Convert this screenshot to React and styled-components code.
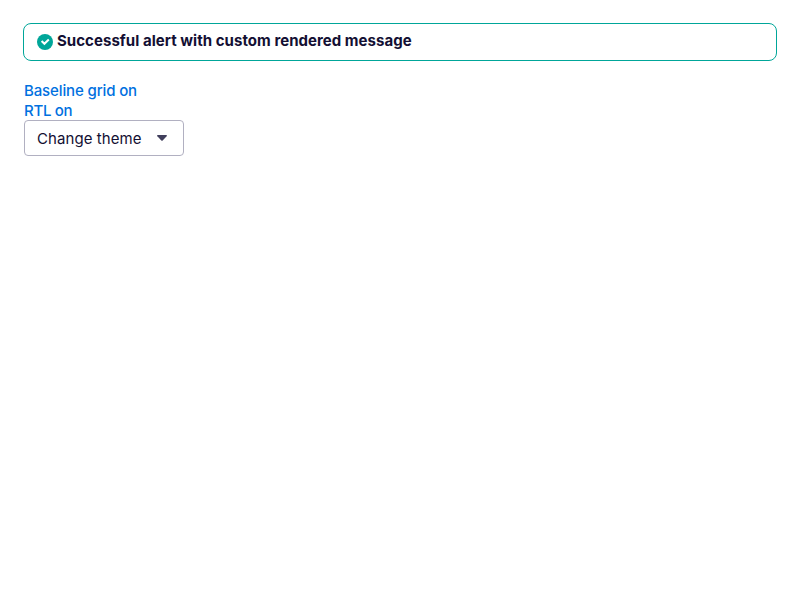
import React from "react";
import styled, { createGlobalStyle } from "styled-components";

const GlobalStyle = createGlobalStyle`
  * { box-sizing: border-box; }
  body { margin: 0; background: #fff; color: #130f33; font-family: Inter, sans-serif; font-size: 15px; line-height: 20px; }
`;
const Page = styled.main`
  padding: 23px 23px 0;
`;
const Alert = styled.div`
  display: flex;
  align-items: center;
  gap: 4px;
  height: 38px;
  padding: 0 13px;
  border: 1px solid #00a699;
  border-radius: 8px;
`;
const CheckIcon = styled.svg`
  width: 16px;
  height: 16px;
  flex: none;
`;
const Message = styled.span`
  padding-bottom: 2px;
  font-weight: 700;
  letter-spacing: 0.04px;
  white-space: nowrap;
`;
const Controls = styled.div`
  display: flex;
  flex-direction: column;
  align-items: flex-start;
  padding: 20px 1px 0;
`;
const Link = styled.a`
  height: 20px;
  color: #0070e0;
  white-space: nowrap;
  font-weight: 500;
  letter-spacing: ${({ $tracking }) => $tracking};
`;
const ThemeButton = styled.button`
  display: flex;
  align-items: center;
  justify-content: space-between;
  width: 160px;
  height: 36px;
  margin-top: -1px;
  padding: 0 16px 0 12px;
  border: 1px solid #b1b0c1;
  border-radius: 4px;
  background: #fff;
  color: inherit;
  font: inherit;
  white-space: nowrap;
`;
const ButtonLabel = styled.span`
  padding-top: 2px;
  letter-spacing: 0.08px;
`;
const Caret = styled.svg`
  width: 10px;
  height: 6px;
`;

export default function App() {
  return (
    <>
      <GlobalStyle />
      <Page>
        <Alert role="status">
          <CheckIcon viewBox="0 0 16 16">
            <circle cx="8" cy="8" r="8" fill="#00a699" />
            <path d="M4.6 7.1 7.4 9.8 11.8 5.6" fill="none" stroke="#fff" strokeWidth="2.1" />
          </CheckIcon>
          <Message>Successful alert with custom rendered message</Message>
        </Alert>
        <Controls>
          <Link $tracking="-0.13px">Baseline grid on</Link>
          <Link $tracking="-0.3px">RTL on</Link>
          <ThemeButton>
            <ButtonLabel>Change theme</ButtonLabel>
            <Caret viewBox="0 0 10 6">
              <path d="M.7 0H9.3Q10.4 .3 9.6 1.2L5.7 5.5Q5 6.2 4.3 5.5L.4 1.2Q-.4 .3 .7 0Z" fill="#413f5c" />
            </Caret>
          </ThemeButton>
        </Controls>
      </Page>
    </>
  );
}
